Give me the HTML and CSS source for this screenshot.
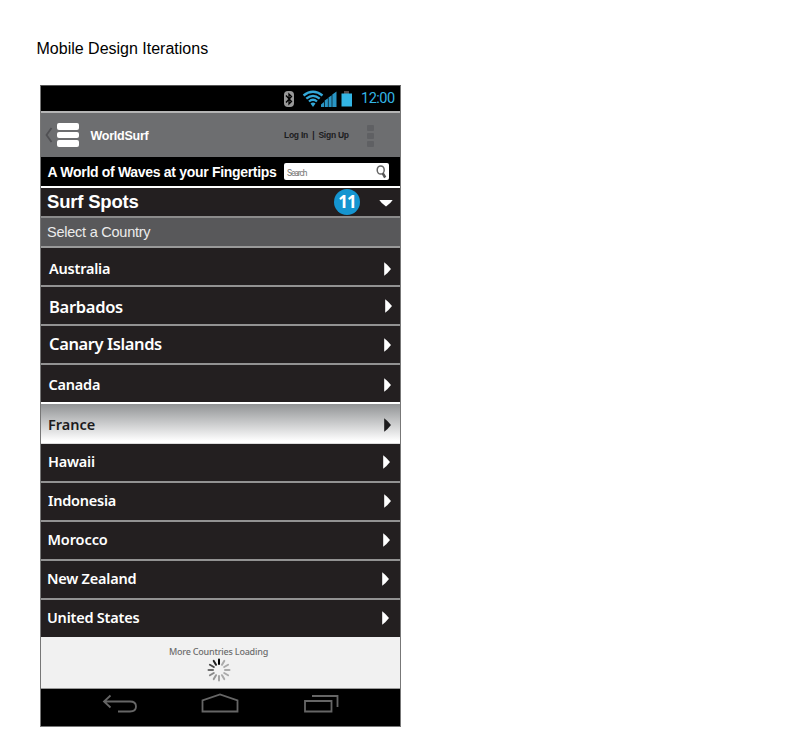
FILE: index.html
```html
<!DOCTYPE html>
<html lang="en">
<head>
<meta charset="utf-8">
<title>Mobile Design Iterations</title>
<link rel="stylesheet" href="styles.css">
</head>
<body>
<h1 class="page-title">Mobile Design Iterations</h1>
<main class="phone">
  <div class="status">
    <svg width="112" height="24" viewBox="0 0 112 24">
      <rect x="1" y="5" width="10" height="16" rx="4" fill="#999"/>
      <path d="M3 9.500L8.500 15.500L6 18V8L8.500 10.500L3 16.500" fill="none" stroke="#000" stroke-width="1.300"/>
      <g fill="none" stroke="#33a8d8" stroke-width="2.300">
        <path d="M20.500 9.500Q30 2 39.500 9.500"/><path d="M23.300 12.700Q30 7 36.700 12.700"/><path d="M26 15.500Q30 12 34 15.500"/>
      </g>
      <path d="M27.500 17.500Q30 15.500 32.500 17.500L30 21Z" fill="#33a8d8"/>
      <g fill="#2995c4"><path d="M38 21V18.500L41 16V21ZM41.700 21V14.500L44.900 12.300V21ZM45.500 21V11.500L48.700 9.200V21ZM49.300 21V8.500L53.500 5.500V21Z"/></g>
      <path d="M61 5H66V8H61Z" fill="#55494a"/><rect x="58.500" y="7.500" width="10.500" height="13" fill="#33b5e5"/>
    </svg>
    <span class="clock">12:00</span>
  </div>
  <header class="appbar">
    <svg class="back" width="8" height="16" viewBox="0 0 8 16"><path d="M6.500 1L1.500 8L6.500 15" fill="none" stroke="#505053" stroke-width="1.800"/></svg>
    <div class="burger"><i></i><i></i><i></i></div>
    <span class="brand">WorldSurf</span>
    <span class="account">Log In &nbsp;|&nbsp; Sign Up</span>
    <div class="more"><i></i><i></i><i></i></div>
  </header>
  <div class="tagline">
    <span class="tag-text">A World of Waves at your Fingertips</span>
    <div class="search"><span>Search</span>
      <svg width="12" height="14" viewBox="0 0 12 14"><ellipse cx="4.700" cy="5" rx="3.500" ry="4.100" fill="none" stroke="#666" stroke-width="1.500"/><path d="M6.800 8.400L9.200 12.500" stroke="#555" stroke-width="2.500"/></svg>
    </div>
  </div>
  <div class="spots"><span class="spots-text">Surf Spots</span><b class="count">11</b>
    <svg width="14" height="8" viewBox="0 0 14 8"><path d="M.3 1H13.700Q11.500 4.500 7 7.500Q2.500 4.500 .3 1Z" fill="#fff"/></svg>
  </div>
  <div class="select">Select a Country</div>
  <ul class="list">
    <li class="australia"><span>Australia</span><svg class="arrow" viewBox="0 0 7 14"><path d="M.2 .2Q4 3 7 7Q4 11 .2 13.800Z"/></svg></li>
    <li class="barbados"><span>Barbados</span><svg class="arrow" viewBox="0 0 7 14"><path d="M.2 .2Q4 3 7 7Q4 11 .2 13.800Z"/></svg></li>
    <li class="canary"><span>Canary Islands</span><svg class="arrow" viewBox="0 0 7 14"><path d="M.2 .2Q4 3 7 7Q4 11 .2 13.800Z"/></svg></li>
    <li class="canada"><span>Canada</span><svg class="arrow" viewBox="0 0 7 14"><path d="M.2 .2Q4 3 7 7Q4 11 .2 13.800Z"/></svg></li>
    <li class="france"><span>France</span><svg class="arrow" viewBox="0 0 7 14"><path d="M.2 .2Q4 3 7 7Q4 11 .2 13.800Z"/></svg></li>
    <li class="hawaii"><span>Hawaii</span><svg class="arrow" viewBox="0 0 7 14"><path d="M.2 .2Q4 3 7 7Q4 11 .2 13.800Z"/></svg></li>
    <li class="indonesia"><span>Indonesia</span><svg class="arrow" viewBox="0 0 7 14"><path d="M.2 .2Q4 3 7 7Q4 11 .2 13.800Z"/></svg></li>
    <li class="morocco"><span>Morocco</span><svg class="arrow" viewBox="0 0 7 14"><path d="M.2 .2Q4 3 7 7Q4 11 .2 13.800Z"/></svg></li>
    <li class="zealand"><span>New Zealand</span><svg class="arrow" viewBox="0 0 7 14"><path d="M.2 .2Q4 3 7 7Q4 11 .2 13.800Z"/></svg></li>
    <li class="states"><span>United States</span><svg class="arrow" viewBox="0 0 7 14"><path d="M.2 .2Q4 3 7 7Q4 11 .2 13.800Z"/></svg></li>
  </ul>
  <div class="loading">
    <span>More Countries Loading</span>
    <svg width="24" height="24" viewBox="-12 -12 24 24" stroke-width="2" stroke-linecap="round">
      <path d="M0-6V-10.500" stroke="#000"/>
      <path d="M0-6V-10.500" stroke="#aaa" transform="rotate(30)"/>
      <path d="M0-6V-10.500" stroke="#aaa" transform="rotate(60)"/>
      <path d="M0-6V-10.500" stroke="#aaa" transform="rotate(90)"/>
      <path d="M0-6V-10.500" stroke="#aaa" transform="rotate(120)"/>
      <path d="M0-6V-10.500" stroke="#aaa" transform="rotate(150)"/>
      <path d="M0-6V-10.500" stroke="#a5a5a5" transform="rotate(180)"/>
      <path d="M0-6V-10.500" stroke="#999" transform="rotate(210)"/>
      <path d="M0-6V-10.500" stroke="#888" transform="rotate(240)"/>
      <path d="M0-6V-10.500" stroke="#6c6c6c" transform="rotate(270)"/>
      <path d="M0-6V-10.500" stroke="#484848" transform="rotate(300)"/>
      <path d="M0-6V-10.500" stroke="#222" transform="rotate(330)"/>
    </svg>
  </div>
  <nav class="nav">
    <svg width="359" height="37" viewBox="0 0 359 37" fill="none" stroke="#666" stroke-width="1.800">
      <path d="M69.500 6.500L63 12.500L69.500 18.500M63 12.500H89Q95 12.500 95 17.500Q95 22.500 89 22.500H77"/>
      <path d="M161.500 22.500V11.500L179 5.500L196.500 11.500V22.500Z"/>
      <path d="M264 12H290.500V22.500H264ZM271 7H296.500V18"/>
    </svg>
  </nav>
</main>
</body>
</html>
```
FILE: styles.css
```css
* { box-sizing: border-box; }
body { margin: 0; background: #fff; font-family: "Liberation Sans", Arial, sans-serif; }
svg { display: block; flex: none; }
.page-title { margin: 40px 0 0 36.500px; font-size: 16px; font-weight: 400; line-height: 18px; height: 45px; color: #000; white-space: nowrap; }
.phone { margin-left: 40px; width: 361px; height: 642px; border: 1px solid #777; background: #000; border-top-color: #555; white-space: nowrap; overflow: hidden; }
.status { height: 25px; display: flex; padding-left: 242px; }
.status svg { width: 112px; margin-right: -34px; }
.clock { font: 14.500px/25px Roboto, sans-serif; color: #33b5e5; width: 36px; letter-spacing: -.5px; }
.appbar { height: 46px; background: #6d6e70; border-top: 2px solid #b5b5b5; display: flex; align-items: center; padding-left: 4px; }
.burger { display: grid; gap: 2px; margin-left: 4px; width: 22px; }
.burger i { height: 6.500px; border-radius: 2px; background: #fff; }
.brand { color: #fff; font-weight: 700; font-size: 12.500px; letter-spacing: -.25px; margin-left: 11.500px; width: 193.500px; padding-top: 1px; }
.account { color: #1c1c1e; font-weight: 700; font-size: 8.500px; letter-spacing: -.26px; width: 82.500px; }
.more { display: grid; gap: 2px; padding-top: 2px; }
.more i { width: 7px; height: 6px; background: #5f6063; border-radius: 1px; }
.tagline { height: 31px; background: #000; border-bottom: 2px solid #fff; display: flex; align-items: center; padding-left: 6.500px; }
.tag-text { color: #fff; font-size: 14px; font-weight: 700; letter-spacing: -.31px; width: 236.500px; }
.search { width: 105px; height: 17px; border-radius: 2px; background: #fff; display: flex; align-items: center; justify-content: space-between; padding: 1px 1px 0 3px; }
.search span { font: 8.500px/15px Roboto, sans-serif; color: #777; letter-spacing: -1.150px; padding-top: 2px; }
.spots { height: 30px; background: #231f20; border-bottom: 2px solid #8b8b8b; display: flex; align-items: center; padding-left: 6px; }
.spots svg { margin-top: 2px; }
.spots-text { color: #fff; font-size: 18.500px; font-weight: 700; letter-spacing: -.2px; width: 287px; }
.count { width: 26px; height: 26px; border-radius: 50%; background: #1595d0; color: #fff; text-align: center; font: 700 17px/26px "Open Sans", sans-serif; letter-spacing: -1px; margin-right: 19px; }
.select { height: 30px; background: #58585a; border-bottom: 2px solid #999; color: #ececec; font-size: 14.500px; letter-spacing: -.24px; line-height: 28px; padding-left: 6px; }
.list { list-style: none; margin: 0; padding: 0; font-family: "Noto Sans", "Open Sans", sans-serif; font-weight: 600; font-size: 14.500px; letter-spacing: -.22px; color: #fff; }
.list li { height: 39px; background: #231f20; border-bottom: 2px solid #929292; display: flex; justify-content: space-between; padding: 10px 9.500px 0 7px; line-height: 20px; }
.arrow { width: 7px; height: 14px; fill: currentColor; margin-top: 3px; }
.list .australia { padding-left: 8px; }
.australia .arrow { margin-top: 4px; }
.list .barbados { padding: 10px 8.500px 0 8px; font-size: 16.500px; letter-spacing: -.3px; }
.barbados .arrow { margin-top: 2px; }
.list .canary { padding: 8px 9.500px 0 8px; font-size: 16.500px; letter-spacing: -.4px; }
.canary .arrow { margin-top: 4px; }
.list .canada { padding-left: 7.500px; padding-top: 10px; border-color: #fff; }
.list .france { background: linear-gradient(#919395, #fff 95%); color: #1c1b1d; height: 40px; border-bottom: 1px solid #ddd; letter-spacing: 0; padding-top: 11px; }
.list .hawaii { padding: 8px 10px 0 7px; }
.list .indonesia { padding-top: 8px; }
.list .morocco { padding: 8px 10px 0 6.500px; letter-spacing: -.1px; }
.list .zealand { padding: 8px 11px 0 6px; }
.list .states { padding: 8px 11px 0 6px; height: 37px; border-bottom: 0; }
.list .canada, .list .france, .list .hawaii, .list .indonesia, .list .morocco, .list .zealand, .list .states { line-height: 18px; }
.loading { height: 52px; background: #f1f1f1; border-bottom: 1px solid #999; display: flex; flex-direction: column; align-items: center; padding: 8px 4px 0 0; font: 500 9px/14px "Noto Sans", sans-serif; letter-spacing: -.21px; color: #6d6d6d; }
.loading svg { margin-top: -1px; }
```
